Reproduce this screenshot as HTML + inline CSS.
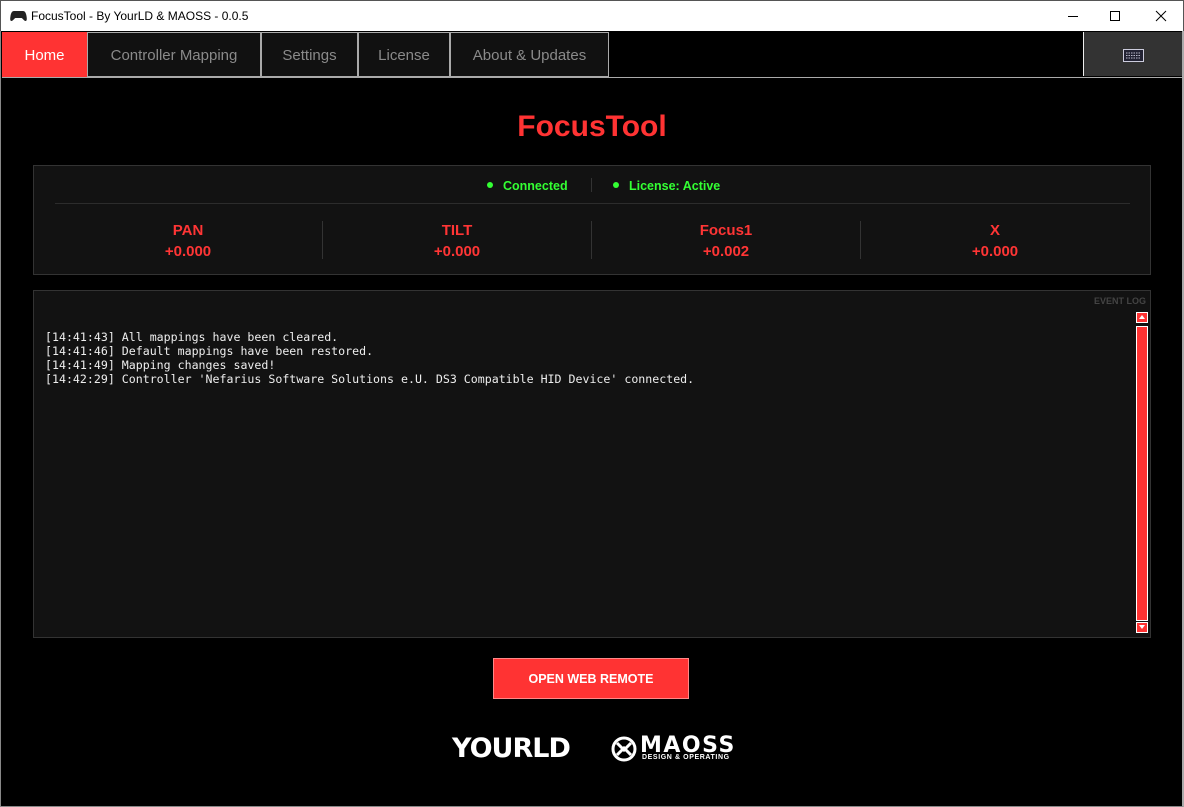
<!DOCTYPE html>
<html><head><meta charset="utf-8"><style>
*{margin:0;padding:0;box-sizing:border-box}
body{width:1184px;height:807px;background:#000;font-family:"Liberation Sans",sans-serif;position:relative;overflow:hidden}
.title{position:absolute;left:0;top:0;width:1184px;height:31px;background:#fff;border:1px solid #555;border-bottom:none}
.title span{position:absolute;left:30px;top:8px;font-size:12px;color:#000}
.frame{position:absolute;left:0;top:31px;width:1184px;height:776px;border:1px solid #888;border-top:none;border-right:2px solid #aaa}
.tab{position:absolute;top:32px;height:45px;background:#111;border:1px solid #aaa;color:#8a8a8a;font-size:15px;text-align:center;line-height:45px}
.pan{position:absolute;background:#121212;border:1px solid #333}
.lbl{position:absolute;width:268px;text-align:center;color:#ff3535;font-weight:bold;font-size:15px;line-height:21px}
.sep{position:absolute;top:221px;width:1px;height:38px;background:#333}
.log{position:absolute;left:45px;top:330px;font-family:"DejaVu Sans Mono","Liberation Mono",monospace;font-size:11.6px;line-height:14px;color:#eee;white-space:pre}
</style></head><body>
<div class="title">
<svg style="position:absolute;left:9px;top:9px" width="17" height="12" viewBox="0 0 17 12"><path d="M4 1h9c2 0 3 2 3.5 5s.5 5-1 5-3-3-4-3h-6c-1 0-2.5 3-4 3s-1.5-2-1-5S2 1 4 1z" fill="#222"/></svg>
<span>FocusTool - By YourLD &amp; MAOSS - 0.0.5</span>
<div style="position:absolute;left:1067px;top:15px;width:10px;height:1px;background:#000"></div>
<div style="position:absolute;left:1109px;top:10px;width:10px;height:10px;border:1px solid #000"></div>
<svg style="position:absolute;left:1154px;top:9px" width="12" height="12"><path d="M1 1L11 11M11 1L1 11" stroke="#000" stroke-width="1"/></svg>
</div>
<div class="frame"></div>
<div class="tab" style="left:2px;width:85px;background:#ff3333;color:#fff;border-color:#ff3333">Home</div>
<div class="tab" style="left:87px;width:174px">Controller Mapping</div>
<div class="tab" style="left:261px;width:97px">Settings</div>
<div class="tab" style="left:358px;width:92px">License</div>
<div class="tab" style="left:450px;width:159px">About &amp; Updates</div>
<div style="position:absolute;left:1083px;top:32px;width:99px;height:44px;background:#333;border-left:1px solid #eee"></div>
<svg style="position:absolute;left:1123px;top:49px" width="21" height="13"><rect x="0.5" y="0.5" width="20" height="12" fill="#223" stroke="#ccd"/><path d="M3 4h15M3 6.5h15M3 9h15" stroke="#bbc" stroke-dasharray="1.5 1"/></svg>
<div style="position:absolute;left:2px;top:77px;width:1180px;height:1px;background:#aaa"></div>
<div style="position:absolute;left:0;top:110px;width:1184px;text-align:center;color:#ff3333;font-weight:bold;font-size:30px">FocusTool</div>
<div class="pan" style="left:33px;top:165px;width:1118px;height:110px"></div>
<div style="position:absolute;left:55px;top:203px;width:1075px;height:1px;background:#2c2c2c"></div>
<div style="position:absolute;left:487px;top:182px;width:6px;height:6px;border-radius:50%;background:#3f3"></div>
<div style="position:absolute;left:503px;top:179px;color:#3f3;font-weight:bold;font-size:12.5px">Connected</div>
<div style="position:absolute;left:591px;top:178px;width:1px;height:14px;background:#333"></div>
<div style="position:absolute;left:613px;top:182px;width:6px;height:6px;border-radius:50%;background:#3f3"></div>
<div style="position:absolute;left:629px;top:179px;color:#3f3;font-weight:bold;font-size:12.5px">License: Active</div>
<div class="lbl" style="left:54px;top:220px">PAN<br>+0.000</div>
<div class="lbl" style="left:323px;top:220px">TILT<br>+0.000</div>
<div class="lbl" style="left:592px;top:220px">Focus1<br>+0.002</div>
<div class="lbl" style="left:861px;top:220px">X<br>+0.000</div>
<div class="sep" style="left:322px"></div><div class="sep" style="left:591px"></div><div class="sep" style="left:860px"></div>
<div class="pan" style="left:33px;top:290px;width:1118px;height:348px"></div>
<div style="position:absolute;left:1094px;top:296px;color:#444;font-weight:bold;font-size:9px">EVENT LOG</div>
<div style="position:absolute;left:1136px;top:312px;width:12px;height:11px;background:#ff3333;border:1px solid #fff"></div>
<svg style="position:absolute;left:1138px;top:314px" width="8" height="6"><path d="M1 5L4 1L7 5z" fill="#fff"/></svg>
<div style="position:absolute;left:1136px;top:326px;width:12px;height:295px;background:#ff3333;border:1px solid #fff"></div>
<div style="position:absolute;left:1136px;top:622px;width:12px;height:11px;background:#ff3333;border:1px solid #fff"></div>
<svg style="position:absolute;left:1138px;top:624px" width="8" height="6"><path d="M1 1L4 5L7 1z" fill="#fff"/></svg>
<div class="log">[14:41:43] All mappings have been cleared.
[14:41:46] Default mappings have been restored.
[14:41:49] Mapping changes saved!
[14:42:29] Controller 'Nefarius Software Solutions e.U. DS3 Compatible HID Device' connected.</div>
<div style="position:absolute;left:493px;top:658px;width:196px;height:41px;background:#ff3333;border:1px solid #f88;color:#fff;font-weight:bold;font-size:12.5px;text-align:center;line-height:41px">OPEN WEB REMOTE</div>
<div style="position:absolute;left:452px;top:733px;color:#fff;font-weight:900;font-size:27px;letter-spacing:-1px;font-family:'DejaVu Sans',sans-serif">YOURLD</div>
<svg style="position:absolute;left:611px;top:736px" width="26" height="26"><circle cx="13" cy="13" r="11" fill="none" stroke="#fff" stroke-width="3"/><path d="M6 7L13 14L20 7M6 19L13 12L20 19" stroke="#fff" stroke-width="3" fill="none"/></svg>
<div style="position:absolute;left:640px;top:733px;color:#fff;font-weight:900;font-size:22px;font-family:'DejaVu Sans',sans-serif;letter-spacing:1.5px">MAOSS</div>
<div style="position:absolute;left:642px;top:754px;color:#fff;font-size:7px;font-weight:bold;letter-spacing:0.6px">DESIGN &amp; OPERATING</div>
</body></html>
